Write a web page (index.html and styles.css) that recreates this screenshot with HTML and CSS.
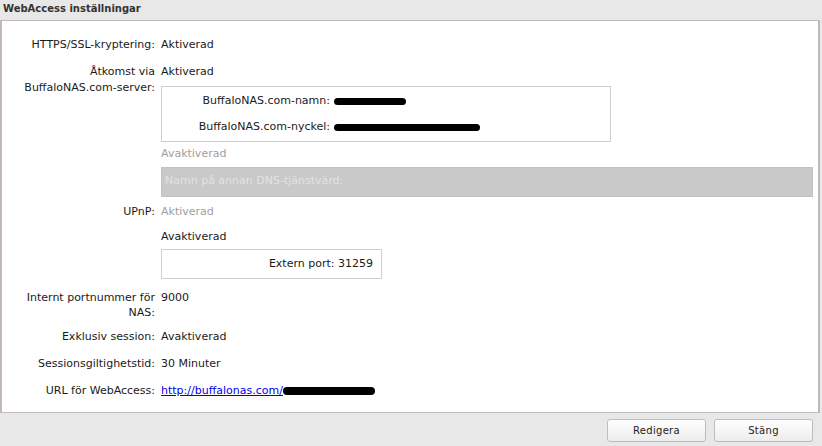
FILE: index.html
```
<!DOCTYPE html>
<html lang="sv">

<head>
    <meta charset="UTF-8">
    <title>WebAccess inställningar</title>
    <link rel="stylesheet" href="styles.css">
</head>

<body>
    <div id="dialog">
        <header class="title">WebAccess inställningar</header>
        <div class="panel">
            <div class="row">
                <div class="label">HTTPS/SSL-kryptering:</div>
                <div class="value">Aktiverad</div>
            </div>
            <div class="row">
                <div class="label">Åtkomst via BuffaloNAS.com-server:</div>
                <div class="value">
                    <div>Aktiverad</div>
                    <div class="box nasBox">
                        <div class="subRow">
                            <span class="subLabel">BuffaloNAS.com-namn:</span>
                            <span class="blob blobName"></span>
                        </div>
                        <div class="subRow">
                            <span class="subLabel">BuffaloNAS.com-nyckel:</span>
                            <span class="blob blobKey"></span>
                        </div>
                    </div>
                    <div class="muted afterBox">Avaktiverad</div>
                    <div class="dnsBox">Namn på annan DNS-tjänstvärd:</div>
                </div>
            </div>
            <div class="row upnp">
                <div class="label">UPnP:</div>
                <div class="value">
                    <div class="muted">Aktiverad</div>
                    <div class="gapTop">Avaktiverad</div>
                    <div class="box portBox">Extern port: 31259</div>
                </div>
            </div>
            <div class="row twoLine">
                <div class="label">Internt portnummer för NAS:</div>
                <div class="value">9000</div>
            </div>
            <div class="row">
                <div class="label">Exklusiv session:</div>
                <div class="value">Avaktiverad</div>
            </div>
            <div class="row">
                <div class="label">Sessionsgiltighetstid:</div>
                <div class="value">30 Minuter</div>
            </div>
            <div class="row">
                <div class="label">URL för WebAccess:</div>
                <div class="value"><a href="#">http://buffalonas.com/<span class="blob blobUrl"></span></a></div>
            </div>
        </div>
        <footer class="buttons">
            <button class="btn">Redigera</button>
            <button class="btn">Stäng</button>
        </footer>
    </div>
</body>

</html>
```

FILE: styles.css
```
* {
    margin: 0;
    padding: 0;
    box-sizing: border-box;
}

body {
    background-color: #e8e8e8;
    font-family: "DejaVu Sans", sans-serif;
    font-size: 11px;
    color: #1a1a1a;
}

#dialog {
    width: 822px;
    height: 446px;
    display: flex;
    flex-direction: column;
}

.title {
    height: 20px;
    padding-left: 3px;
    line-height: 18px;
    font-weight: bold;
    font-size: 10px;
    color: #333;
}

.panel {
    width: 820px;
    height: 393px;
    background-color: #fff;
    border: 1px solid #c2b8b8;
    border-left-width: 2px;
    border-right-width: 2px;
    padding: 16px 0 0 0;
    display: flex;
    flex-direction: column;
    gap: 11px;
}

.row {
    display: flex;
    line-height: 16px;
}

.label {
    width: 156px;
    padding-left: 18px;
    padding-right: 3px;
    text-align: right;
}

.value {
    flex: 1;
    padding-left: 3px;
}

.muted {
    color: #a0a0a0;
}

.box {
    border: 1px solid #cfcfcf;
}

.nasBox {
    width: 450px;
    height: 56px;
    margin-top: 6px;
    padding-top: 1px;
}

.subRow {
    display: flex;
    align-items: center;
    height: 26px;
}

.subLabel {
    width: 172px;
    text-align: right;
    padding-right: 4px;
}

.blob {
    display: inline-block;
    background-color: #000;
    border-radius: 4px;
}

.blobName {
    width: 72px;
    height: 7px;
}

.blobKey {
    width: 146px;
    height: 7px;
}

.blobUrl {
    width: 92px;
    height: 8px;
    vertical-align: middle;
}

.afterBox {
    margin-top: 4px;
}

.dnsBox {
    width: 652px;
    height: 30px;
    margin-top: 5px;
    padding-left: 3px;
    line-height: 26px;
    background-color: #c9c9c9;
    border: 1px solid #c2c2c2;
    color: #e2e2e2;
}

.upnp {
    margin-top: -4px;
}

.gapTop {
    margin-top: 9px;
}

.portBox {
    width: 221px;
    height: 30px;
    margin-top: 4px;
    padding-right: 8px;
    text-align: right;
    line-height: 27px;
}

.twoLine {
    line-height: 15px;
    margin-bottom: -2px;
}

a {
    color: #0000ee;
}

.buttons {
    display: flex;
    justify-content: flex-end;
    gap: 8px;
    padding: 6px 9px 0 0;
}

.btn {
    width: 99px;
    height: 23px;
    border: 1px solid #bdbdbd;
    border-radius: 3px;
    background: linear-gradient(#ffffff, #ececec);
    font-family: "DejaVu Sans", sans-serif;
    font-size: 10px;
    letter-spacing: 0.3px;
    color: #222;
}
```
